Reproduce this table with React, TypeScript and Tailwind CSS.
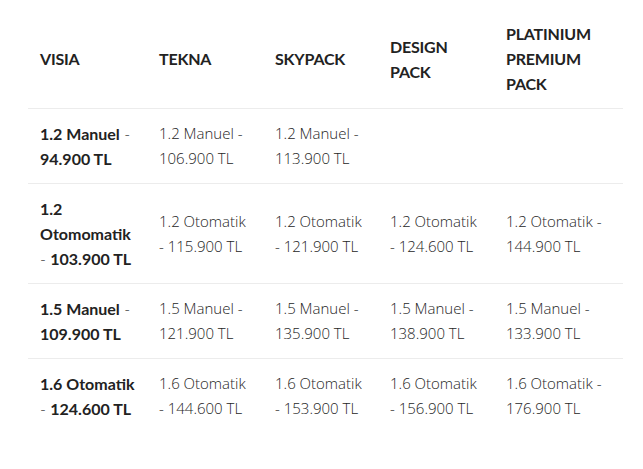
import type { ReactNode } from "react";

const columns = ["VISIA", "TEKNA", "SKYPACK", "DESIGN PACK", "PLATINIUM PREMIUM PACK"];

const B = ({ children }: { children: ReactNode }) => <strong className="font-bold text-[#222]">{children}</strong>;

type Row = {
  id: string;
  lead: ReactNode[];
  cells: string[];
};

const rows: Row[] = [
  {
    id: "r1",
    lead: [<><B>1.2 Manuel</B> -</>, <B>94.900 TL</B>],
    cells: ["1.2 Manuel - 106.900 TL", "1.2 Manuel - 113.900 TL", "", ""]
  },
  {
    id: "r2",
    lead: [<B>1.2</B>, <B>Otomomatik</B>, <>- <B>103.900 TL</B></>],
    cells: ["1.2 Otomatik - 115.900 TL", "1.2 Otomatik - 121.900 TL", "1.2 Otomatik - 124.600 TL", "1.2 Otomatik - 144.900 TL"]
  },
  {
    id: "r3",
    lead: [<><B>1.5 Manuel</B> -</>, <B>109.900 TL</B>],
    cells: ["1.5 Manuel - 121.900 TL", "1.5 Manuel - 135.900 TL", "1.5 Manuel - 138.900 TL", "1.5 Manuel - 133.900 TL"]
  },
  {
    id: "r4",
    lead: [<B>1.6 Otomatik</B>, <>- <B>124.600 TL</B></>],
    cells: ["1.6 Otomatik - 144.600 TL", "1.6 Otomatik - 153.900 TL", "1.6 Otomatik - 156.900 TL", "1.6 Otomatik - 176.900 TL"]
  }
];

const widths = ["w-[119px]", "w-[116px]", "w-[115px]", "w-[116px]", "w-[129px]"];

export default function App() {
  return (
    <div className="min-h-[469px] bg-white pl-[28px] pt-[9px] font-['Open_Sans',sans-serif] text-[15px] leading-[25px] text-[#262626]">
      <table className="w-[595px] table-fixed border-collapse">
        <colgroup>
          {widths.map((w) => (
            <col key={w} className={w} />
          ))}
        </colgroup>
        <thead>
          <tr className="border-b border-[#ececec]">
            {columns.map((c) => (
              <th
                key={c}
                className="px-3 py-3 text-left align-middle font-['Lato',sans-serif] text-[16px] font-bold tracking-[-0.2px] text-[#222]"
              >
                {c}
              </th>
            ))}
          </tr>
        </thead>
        <tbody>
          {rows.map((r, i) => (
            <tr key={r.id} className={i < rows.length - 1 ? "border-b border-[#ececec]" : ""}>
              <td className="whitespace-nowrap px-3 py-3 align-middle font-['Lato',sans-serif] text-[16px] font-light">
                {r.lead.map((line, k) => (
                  <div key={k}>{line}</div>
                ))}
              </td>
              {r.cells.map((c, j) => (
                <td key={j} className="px-3 py-3 align-middle font-light">
                  {c}
                </td>
              ))}
            </tr>
          ))}
        </tbody>
      </table>
    </div>
  );
}
